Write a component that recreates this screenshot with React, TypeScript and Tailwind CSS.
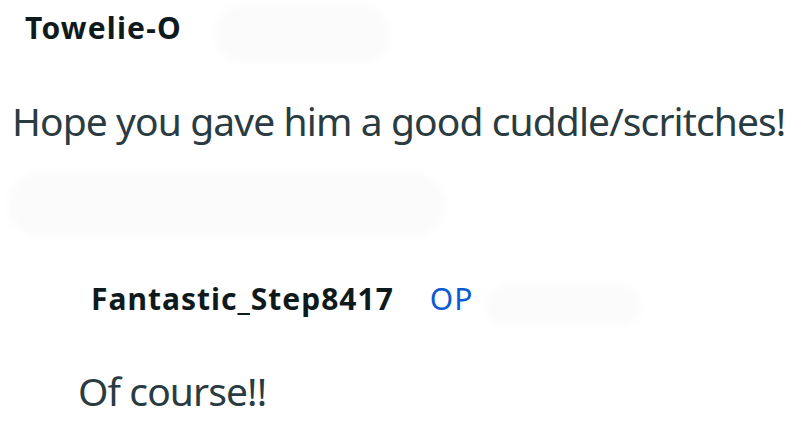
import React from "react";

// blurred-out pills that hide timestamps / avatars in the screenshot
const Blur = ({ className }: { className: string }) => (
  <div className={`shrink-0 rounded-full bg-[#fbfbfb] blur-[3px] ${className}`} />
);

export default function App() {
  return (
    <div className="w-[800px] h-[447px] bg-white overflow-hidden font-['Noto_Sans',sans-serif]">
      <div className="flex items-start pl-[25px] pt-[5px]">
        <span className="mt-[8px] text-[30px] leading-[30px] font-bold text-[#0f1a1c] tracking-[1.2px]">Towelie-O</span>
        <Blur className="ml-[32px] w-[176px] h-[58px]" />
      </div>
      <p className="mt-[38px] pl-[12px] text-[39px] leading-[39px] text-[#2a3c42] tracking-[-0.9px] whitespace-nowrap">
        Hope you gave him a good cuddle/scritches!
      </p>
      <Blur className="mt-[32px] ml-[8px] w-[437px] h-[65px]" />
      <div className="flex items-start pl-[91px] mt-[47px]">
        <span className="text-[30px] leading-[30px] font-bold text-[#0f1a1c] tracking-[1px]">Fantastic_Step8417</span>
        <span className="ml-[36px] text-[30px] leading-[30px] text-[#0a5bd2] tracking-[1px]">OP</span>
        <Blur className="ml-[12px] mt-[1px] w-[156px] h-[40px]" />
      </div>
      <p className="mt-[46px] pl-[78px] text-[39px] leading-[39px] text-[#2a3c42] tracking-[-0.9px]">Of course!!</p>
    </div>
  );
}
